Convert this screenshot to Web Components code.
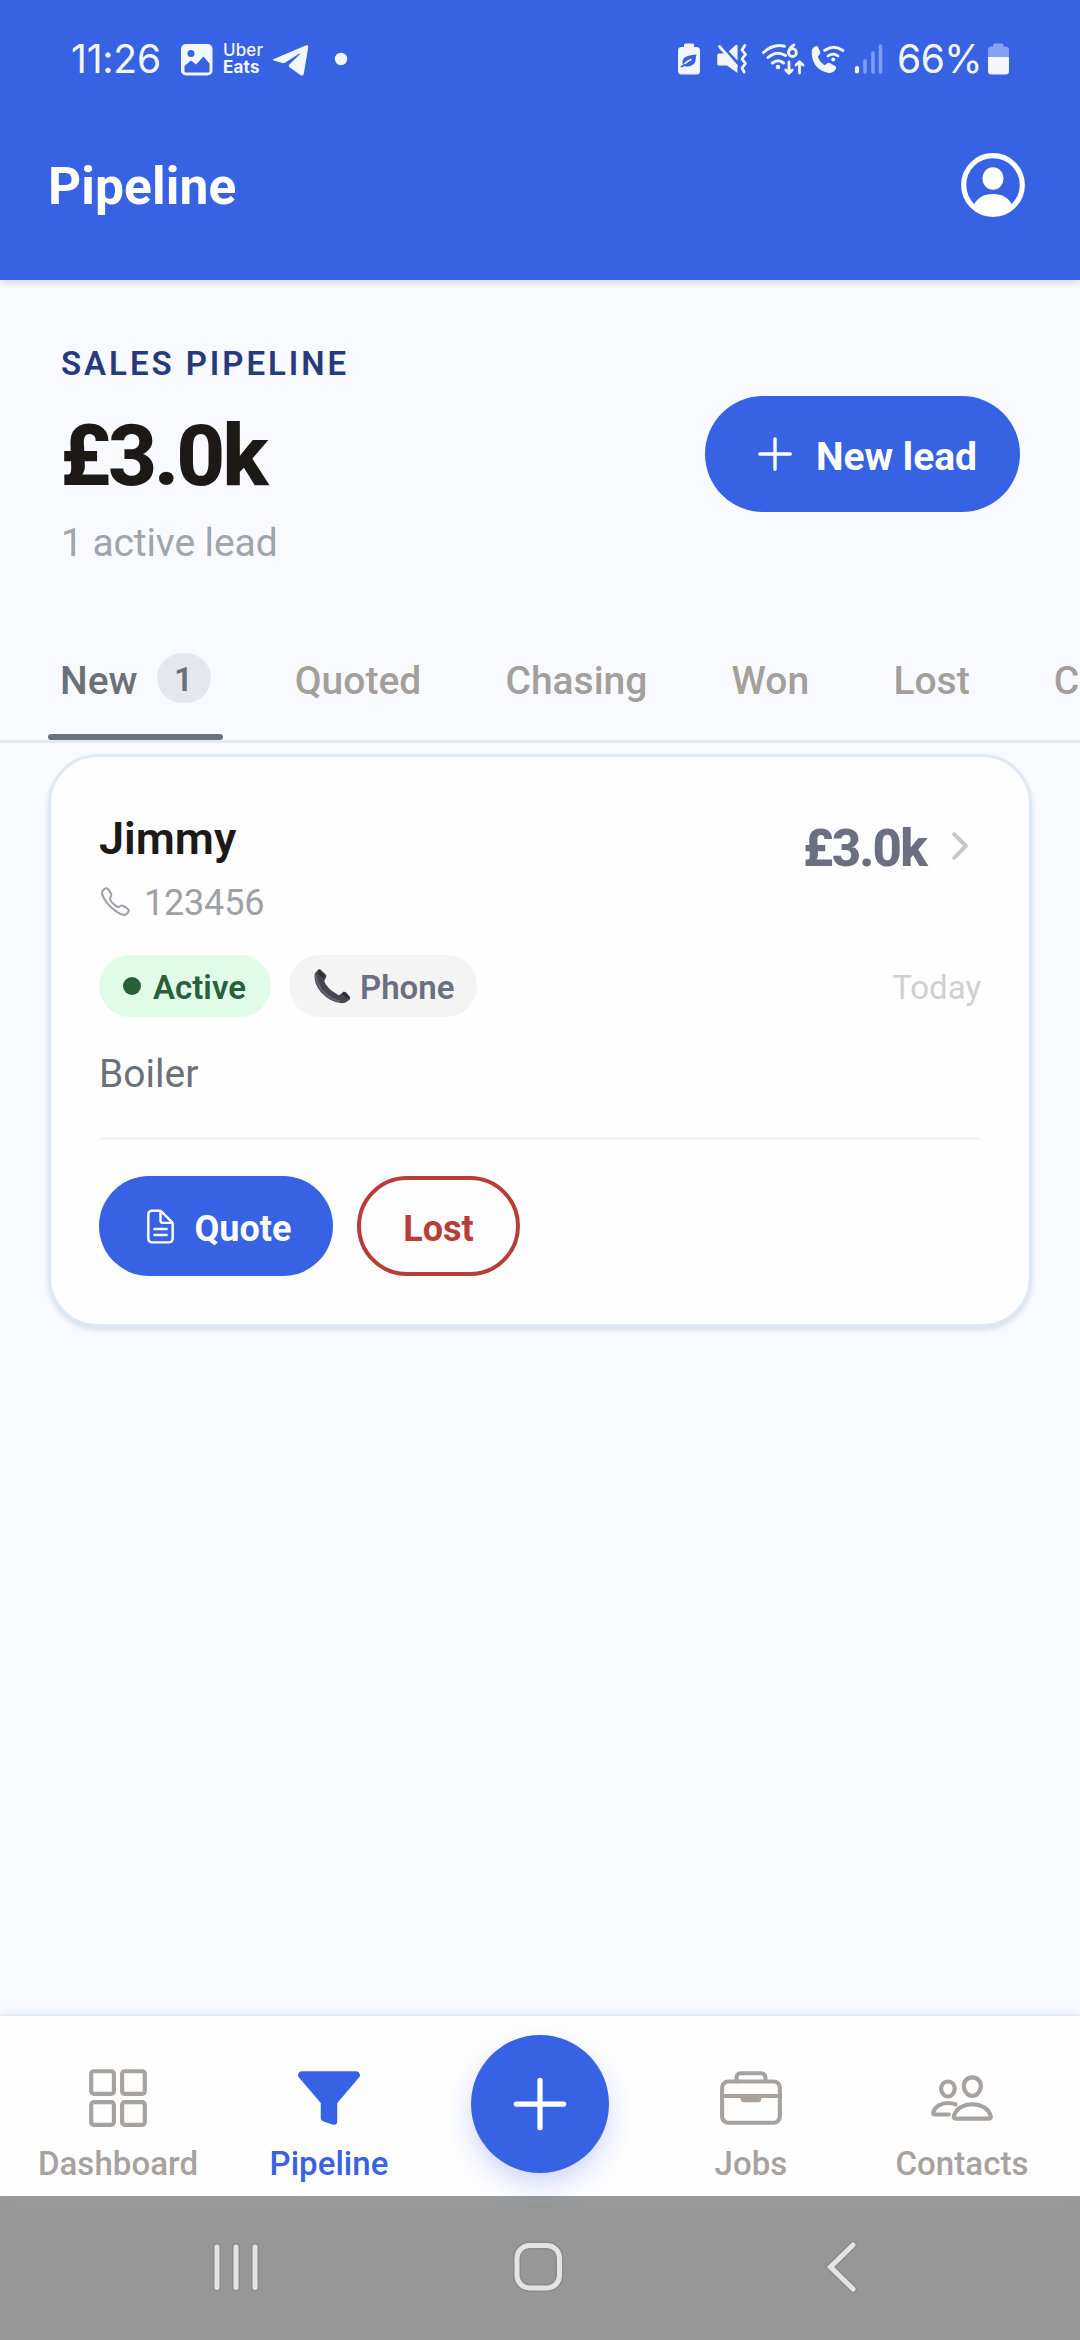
<!DOCTYPE html>
<html lang="en">
<head>
<meta charset="utf-8">
<title>Pipeline</title>
<style>
html,body{margin:0;padding:0}
body{font-family:Roboto,"Liberation Sans",sans-serif;width:1080px;height:2340px;overflow:hidden;background:#f9faff}
</style>
</head>
<body>
<pipeline-app></pipeline-app>
<script>
const define = (name, html) => customElements.define(name, class extends HTMLElement {
  constructor() {
    super();
    const t = document.createElement('template');
    t.innerHTML = html;
    this.attachShadow({mode: 'open'}).append(t.content.cloneNode(true));
  }
});

const ICONS = {
  add: '<path d="M256 112v288M400 256H112"/>',
  chevron: '<path stroke-width="48" d="M184 112l144 144-144 144"/>',
  call: '<path d="M451 374c-15.88-16-54.34-39.35-73-48.76-24.3-12.24-26.3-13.24-45.4.95-12.74 9.47-21.21 17.93-36.12 14.75s-47.31-21.11-75.68-49.39-47.34-61.62-50.53-76.48 5.41-23.23 14.79-36c13.22-18 12.22-21 .92-45.3-8.81-18.9-32.84-57-48.9-72.8C119.9 44 119.9 47 108.83 51.6A160.15 160.15 0 0083 65.37C67 76 58.12 84.83 51.91 98.1s-9 44.38 23.07 102.64 54.57 88.05 101.14 134.49S258.5 406.64 310.85 436c64.76 36.27 89.6 29.2 102.91 23s22.18-15 32.83-31a159.09 159.09 0 0013.8-25.8C465 391.17 468 391.17 451 374z"/>',
  doc: '<path d="M416 221.25V416a48 48 0 01-48 48H144a48 48 0 01-48-48V96a48 48 0 0148-48h98.75a32 32 0 0122.62 9.37l141.26 141.26a32 32 0 019.37 22.62z"/><path d="M256 56v120a32 32 0 0032 32h120M176 288h160M176 368h160"/>',
  grid: '<rect x="48" y="48" width="176" height="176" rx="20"/><rect x="288" y="48" width="176" height="176" rx="20"/><rect x="48" y="288" width="176" height="176" rx="20"/><rect x="288" y="288" width="176" height="176" rx="20"/>',
  funnel: '<path fill="currentColor" d="M35.4 87.12l168.65 196.44A16.07 16.07 0 01208 294v119.32a7.93 7.93 0 005.39 7.59l80.15 26.67A7.94 7.94 0 00304 440V294a16.07 16.07 0 014-10.44L476.6 87.12A14 14 0 00466.12 64H45.88A14 14 0 0035.4 87.12z"/>',
  briefcase: '<rect x="32" y="128" width="448" height="320" rx="48"/><path d="M144 128V96a32 32 0 0132-32h160a32 32 0 0132 32v32M480 240H32"/><path fill="currentColor" d="M320 240v24a8 8 0 01-8 8H200a8 8 0 01-8-8v-24z"/>',
  people: '<path d="M402 168c-2.93 40.67-33.1 72-66 72s-63.12-31.32-66-72c-3-42.31 26.37-72 66-72s69 30.46 66 72z"/><path d="M336 304c-65.17 0-127.84 32.37-143.54 95.41-2.08 8.34 3.15 16.59 11.72 16.59h263.65c8.57 0 13.77-8.25 11.72-16.59C463.85 335.36 401.18 304 336 304z"/><path d="M200 185.94c-2.34 32.48-26.72 58.06-53 58.06s-50.7-25.57-53-58.06C91.61 152.15 115.34 128 147 128s55.39 24.77 53 57.94zM206 306c-18.05-8.27-37.93-11.45-59-11.45-52 0-102.1 25.85-114.65 76.2-1.65 6.66 2.53 13.25 9.37 13.25H154"/>'
};

customElements.define('ui-icon', class extends HTMLElement {
  constructor() { super(); this.attachShadow({mode: 'open'}); }
  connectedCallback() {
    const s = this.getAttribute('size');
    this.shadowRoot.innerHTML = `<style>:host{display:block;flex:none;width:${s}px;height:${s}px}svg{display:block}</style>
      <svg width="${s}" height="${s}" viewBox="0 0 512 512" fill="none" stroke="currentColor" stroke-width="32" stroke-linecap="round" stroke-linejoin="round">${ICONS[this.getAttribute('name')]}</svg>`;
  }
});

define('status-bar', `
<style>
:host{display:flex;height:118px;box-sizing:border-box;align-items:center;padding:0 70px 0 71px;color:#f2f7ff}
svg{display:block;flex:none}
.time,.pct{font:400 39px/46px Inter,Roboto,sans-serif;white-space:nowrap}
.time{width:105px;letter-spacing:-.2px}
.pct{width:89px;letter-spacing:-.5px}
.uber{display:flex;flex-direction:column;width:44px;font:500 17px/17px Inter,sans-serif;margin-top:-1px;letter-spacing:.1px}
.uber b{font-weight:700;letter-spacing:.2px}
.sp{flex:1}
</style>
<span class="time">11:26</span>
<svg width="47" height="40" viewBox="176 39 47 40"><rect x="181" y="44" width="31.500" height="31.500" rx="5" fill="currentColor"/><circle cx="191" cy="53.500" r="3.500" fill="#3762e3"/><path d="M184.500 66l6.500-5.500 5 4 7.500-8 6 7v7.500a1.500 1.500 0 01-1.500 1.500h-22a1.500 1.500 0 01-1.500-1.500z" fill="#3762e3"/></svg>
<div class="uber"><span>Uber</span><b>Eats</b></div>
<svg width="90" height="40" viewBox="267 39 90 40" fill="currentColor"><path d="M273.300 59.200L305.600 45.400q3-.900 2.600 2.200L303.800 73.700q-.8 3-3.500 1.300l-10.800-7.800q-1.600-1.300-.2-2.800l10.600-10.200q.4-.9-.8-.5l-13.800 8.800q-1.400.8-3 .4l-8.600-2.400q-1.800-.5-.4-1.300z"/><circle cx="341" cy="59" r="6.200"/></svg>
<span class="sp"></span>
<svg width="230" height="40" viewBox="667 39 230 40" fill="none" stroke="currentColor" stroke-linecap="round" stroke-linejoin="round">
  <g stroke="none" fill="currentColor"><rect x="684" y="43.500" width="10" height="6" rx="1.500"/><rect x="678" y="47" width="22" height="27.500" rx="3.500"/></g>
  <path d="M696.500 54.500c-8 .5-14 2.500-14 7.500 0 2 .8 3.500 2.200 4.300 4.500 1 8.800-.8 10.300-4 .9-2.300.6-5 1.500-7.800z" fill="#3762e3" stroke="none"/><path d="M684.500 64c2-2 4-3.500 6.500-4.500" stroke-width="1.600"/>
  <path d="M681.500 66.500l3.500-1.500" stroke="#3762e3" stroke-width="1.800"/>
  <g stroke="none" fill="currentColor"><path d="M717.300 55q0-1.500 1.500-1.500h5.500L737.500 67V73l-10.500-7.500h-8.200q-1.500 0-1.500-1.500zM728.500 51.500l7-6.300q2-1.300 2 .8v15z"/></g>
  <path d="M722.500 46.500L739 64" stroke="#3762e3" stroke-width="2.400"/>
  <path d="M719.500 46.500L736.500 66" stroke-width="2.800"/>
  <path d="M744.800 45.500l-2.800 4.500 3.500 4.500-3.500 4.500 3.500 4.500-3.500 4.500 2.200 4" stroke-width="2.800"/>
  <g stroke-width="3"><path d="M763.500 52.500q10-9 21-6.300M768 57.500q8.500-7.500 17.500-2M772.500 63q5.500-4.500 11 0"/><path d="M794 45q-4.500 2.500-5.500 7.500" stroke-width="2.800"/><circle cx="792.500" cy="52.600" r="3.900" stroke-width="2.800"/><path d="M789 62v11M785.800 70l3.200 3.300 3.200-3.300M799.500 73V62M796 65l3.500-3.300L803 65" stroke-width="2.800"/></g>
  <circle cx="778" cy="67" r="2.300" fill="currentColor" stroke="none"/>
  <path d="M812 49.500q1.500-3 4-3.500 1.500-.3 2.300 1.500l1.800 4.500q.6 1.800-.9 3l-1.400 1.500q1.800 5.700 7 8.700l2.400-2q1.500-1 3 0l5 2.800q1.600 1.200.8 2.700-2.200 4.200-7.200 4.200-15.500-3-17-18.500-.2-2 .2-4.900z" fill="currentColor" stroke="none"/>
  <path d="M824.500 50.500q9-6.500 18.500 0M828 56q5-3.800 10 0" stroke-width="2.800"/><circle cx="833.200" cy="59.500" r="2" fill="currentColor" stroke="none"/>
  <path d="M857 68v3.500" stroke-width="4.200"/><path d="M865 61v11M873 53v19M880.500 46v26" stroke-width="3.600" stroke="#7f9df5"/>
</svg>
<span class="pct">66%</span>
<svg width="24" height="40" viewBox="986 39 24 40"><path d="M993 46.500v-1.500q0-1.500 1.500-1.500h7.500q1.500 0 1.500 1.500v1.500h2q3.500 0 3.500 3.500v8h-21v-8q0-3.500 3.500-3.500z" fill="#86a1f3"/><path d="M988 57h21v14q0 3.500-3.500 3.500h-14q-3.500 0-3.500-3.500z" fill="#f2f7ff"/></svg>
`);

define('app-bar', `
<style>
:host{display:block;height:280px;background:#3762e3;box-shadow:0 2px 8px rgba(60,60,30,.2)}
.row{display:flex;height:134px;align-items:center;justify-content:space-between;padding:0 55px 0 48px;color:#fff}
h1{margin:3px 0 0;font-size:51.500px;line-height:60px;font-weight:700;letter-spacing:.1px}
</style>
<status-bar></status-bar>
<div class="row"><h1><slot></slot></h1>
<svg width="64" height="64" viewBox="0 0 64 64"><circle cx="32" cy="32" r="29.300" fill="none" stroke="#fff" stroke-width="5.200"/><ellipse cx="32" cy="25.500" rx="10.500" ry="11.300" fill="#fff"/><path d="M12.500 52.500Q18 41 32 41t19.500 11.500Q43 61.500 32 61.500T12.500 52.500z" fill="#fff"/></svg></div>
`);

define('pill-button', `
<style>
:host{display:flex;flex:none;box-sizing:border-box;align-items:center;justify-content:center;border-radius:60px;background:#3762e3;color:#fff;font-weight:700;white-space:nowrap}
:host([outline]){background:none;border:4px solid #b93d36;color:#b93d36}
span{padding-top:6px}
</style><slot name="icon"></slot><span><slot></slot></span>
`);

define('pipeline-summary', `
<style>
:host{display:flex;align-items:center;justify-content:space-between;padding:64px 60px 0 61px}
.t{display:flex;flex-direction:column}
.a{font-size:33px;line-height:40px;font-weight:600;letter-spacing:2.960px;color:#263a7c}
.b{font-size:85px;line-height:100px;font-weight:800;letter-spacing:-2.900px;color:#1c1917;margin:22px 0 0 -1px}
.c{font-size:39px;line-height:46px;color:#a0a4ab;margin-top:14px;letter-spacing:-.1px}
pill-button{width:315px;height:116px;font-size:39px;gap:14px;margin-bottom:3px}
</style>
<div class="t"><span class="a">SALES PIPELINE</span><span class="b">£3.0k</span><span class="c">1 active lead</span></div>
<pill-button><ui-icon slot="icon" name="add" size="54"></ui-icon>New lead</pill-button>
`);

define('tab-item', `
<style>
:host{display:flex;flex-direction:column;flex:none;height:116px;color:#a39f9b;font-size:39px;font-weight:500}
.l{display:flex;flex:1;align-items:center;gap:19px;padding:3px 12px 0;line-height:46px;white-space:nowrap}
.u{height:6px;border-radius:3px}
:host([active]){color:#6b7079}
:host([active]) .u{background:#6b7280}
</style><div class="l"><slot></slot><slot name="count"></slot></div><div class="u"></div>
`);

define('tab-bar', `
<style>
:host{display:flex;gap:60.200px;margin-top:58px;padding-left:48px;border-bottom:3px solid #e4e8ef;overflow:hidden}
b{display:flex;align-items:center;justify-content:center;width:54px;height:50px;margin-top:-5px;border-radius:25px;background:#e4e8ed;font-size:33px;font-weight:600;line-height:50px;padding-top:3px;box-sizing:border-box}
</style>
<tab-item active>New<b slot="count">1</b></tab-item><tab-item>Quoted</tab-item><tab-item>Chasing</tab-item><tab-item>Won</tab-item><tab-item>Lost</tab-item><tab-item>C</tab-item>
`);

define('status-chip', `
<style>
:host{display:flex;align-items:center;box-sizing:border-box;height:62px;border-radius:31px;font-size:33px;font-weight:600;background:#f4f4f4;color:#6b7080}
span{padding-top:2px}
:host([active]){background:#e0fbe8;color:#2a5f3b}
</style><slot name="icon"></slot><span><slot></slot></span>
`);

define('lead-card', `
<style>
:host{display:block;box-sizing:border-box;margin:11px 48px 0;height:573px;background:#fefeff;border:3px solid #dfe8f5;border-radius:50px;padding:48px;box-shadow:0 3px 5px rgba(60,90,130,.17)}
.top,.r,.ph,.chips,.acts{display:flex}
.top{justify-content:space-between;align-items:flex-start}
.name{font-size:45px;line-height:60px;font-weight:600;color:#1c1917;margin-top:4px}
.ph{align-items:center;gap:12px;height:44px;margin-top:12px;color:#9ca0a8;font-size:36px;letter-spacing:-.2px}
.ph ui-icon{margin-top:-3px}
.r{margin-top:14px;align-items:center;gap:13px;font-size:51px;line-height:60px;font-weight:800;color:#6b7080;letter-spacing:-1.800px}
.r ui-icon{color:#c8c8c8;margin-top:-6px}
.chips{align-items:center;gap:18px;margin-top:30px}
.a{padding:0 24px;gap:12px;width:172px}
.p{padding:0 24px;gap:9px;width:188px}
.dot{width:18px;height:18px;border-radius:9px;background:#2a5f33;flex:none}
.day{margin-left:auto;font-size:33px;color:#d0d0d0;line-height:40px;padding:3px 0 0}
.job{font-size:39px;line-height:50px;color:#6b7079;margin-top:32px}
.div{height:3px;background:#f4f5f7;margin:38px 0 36px}
.acts{gap:24px}
.acts pill-button{height:100px;font-size:36px}
.q{width:234px;gap:15px}.l{width:163px}
svg{display:block;flex:none}
</style>
<div class="top"><div><div class="name">Jimmy</div><div class="ph"><ui-icon name="call" size="33"></ui-icon><span>123456</span></div></div>
<div class="r"><span>£3.0k</span><ui-icon name="chevron" size="42"></ui-icon></div></div>
<div class="chips">
<status-chip class="a" active><i class="dot" slot="icon"></i>Active</status-chip>
<status-chip class="p"><svg slot="icon" width="38" height="36" viewBox="313 970 38 36"><path d="M315.500 974.500l3-3q1-.8 2 .1l5.200 5q1 1 .5 2.300l-2 4.300q3 8 14.800 14l5-3.200q1-.6 2 .2l4 5q.7 1.200-.3 2.300-3.500 3.500-8 3.700-11-.6-20.500-10.700-7-8-6.700-16.500 0-2.300 1-3.500z" fill="#474550"/><path d="M316 977q0 9.500 8 17.500 8 7.500 16 8.700" fill="none" stroke="#66616e" stroke-width="2"/><path d="M318.500 971.500l6.500 6.500-1.600 2.500-5-5zM343.500 993.500l6.500 5.500-2 1.500-6.500-4.500z" fill="#2e2c36"/></svg>Phone</status-chip>
<span class="day">Today</span></div>
<div class="job">Boiler</div>
<div class="div"></div>
<div class="acts"><pill-button class="q"><ui-icon slot="icon" name="doc" size="39"></ui-icon>Quote</pill-button><pill-button class="l" outline>Lost</pill-button></div>
`);

define('nav-item', `
<style>
:host{display:flex;flex-direction:column;align-items:center;width:211px;padding-top:49px;box-sizing:border-box;color:#a8a29e}
:host([active]){color:#3762e3}
.l{font-size:33px;line-height:40px;font-weight:500;margin-top:13px;letter-spacing:.05px}
</style><slot name="icon"></slot><span class="l"><slot></slot></span>
`);

define('bottom-nav', `
<style>
:host{display:flex;flex:none;justify-content:center;height:180px;background:#fefeff;box-shadow:0 -1px 2px rgba(90,120,150,.12),0 -4px 14px rgba(200,220,240,.3)}
.f{width:211px;display:flex;justify-content:center;align-items:flex-start}
.fab{display:flex;align-items:center;justify-content:center;width:138px;height:138px;margin-top:19px;border-radius:50%;background:#3762e3;color:#fff;box-shadow:0 12px 26px rgba(55,80,227,.22);z-index:1}
</style>
<nav-item><ui-icon slot="icon" name="grid" size="66"></ui-icon>Dashboard</nav-item>
<nav-item active><ui-icon slot="icon" name="funnel" size="66"></ui-icon>Pipeline</nav-item>
<div class="f"><div class="fab"><ui-icon name="add" size="84"></ui-icon></div></div>
<nav-item><ui-icon slot="icon" name="briefcase" size="66"></ui-icon>Jobs</nav-item>
<nav-item><ui-icon slot="icon" name="people" size="66"></ui-icon>Contacts</nav-item>
`);

define('system-nav', `
<style>
:host{display:flex;flex:none;height:144px;box-sizing:border-box;background:#979797;padding:44px 221px 0 210px;justify-content:space-between}
svg{display:block}
.home{margin-right:10px}
</style>
<svg width="52" height="54" viewBox="210 2240 52 54" stroke="#8b8b8b" stroke-width="8" stroke-linecap="round"><path d="M217 2247v40.500M236 2247v40.500M255 2247v40.500"/><path stroke="#e4e4e4" stroke-width="5" d="M217 2247v40.500M236 2247v40.500M255 2247v40.500"/></svg>
<svg class="home" width="54" height="54" viewBox="510.500 2240 54 54" fill="none" stroke-width="8" stroke="#8b8b8b"><rect x="516.500" y="2245.500" width="42.500" height="42.500" rx="12.500"/><rect x="516.500" y="2245.500" width="42.500" height="42.500" rx="12.500" stroke="#e4e4e4" stroke-width="5"/></svg>
<svg width="36" height="54" viewBox="823 2240 36 54" fill="none" stroke-width="8" stroke="#8b8b8b" stroke-linecap="round"><path d="M853 2245l-22.500 22 22.500 22"/><path stroke="#e4e4e4" stroke-width="5" d="M853 2245l-22.500 22 22.500 22"/></svg>
`);

define('pipeline-app', `
<style>
:host{display:flex;flex-direction:column;width:1080px;height:2340px;overflow:hidden;background:#f9faff}
main{flex:1;min-height:0}
bottom-nav{z-index:1}
</style>
<app-bar>Pipeline</app-bar>
<main><pipeline-summary></pipeline-summary><tab-bar></tab-bar><lead-card></lead-card></main>
<bottom-nav></bottom-nav>
<system-nav></system-nav>
`);
</script>
</body>
</html>
